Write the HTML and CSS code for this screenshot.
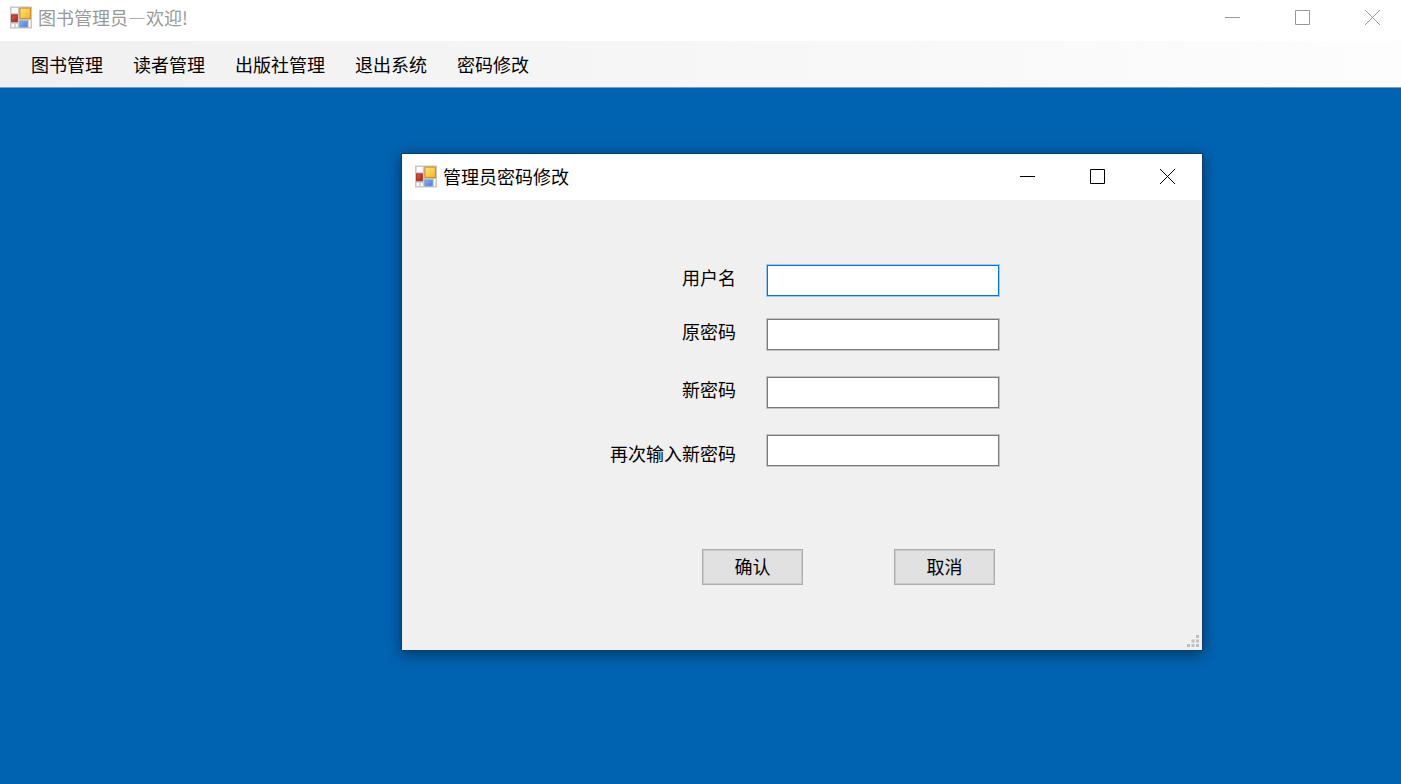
FILE: index.html
```html
<!DOCTYPE html>
<html lang="zh-CN">
<head>
    <meta charset="UTF-8">
    <meta name="viewport" content="width=device-width, initial-scale=1.0">
    <title>图书管理员—欢迎!</title>
    <link rel="stylesheet" href="styles.css">
</head>
<body>
    <!-- Shared icons -->
    <svg class="sprite" aria-hidden="true">
        <defs>
            <linearGradient id="gold" x1="0" y1="0" x2="1" y2="1">
                <stop offset="0" stop-color="#ffe680"/>
                <stop offset="1" stop-color="#f0b41c"/>
            </linearGradient>
            <linearGradient id="red" x1="0" y1="0" x2="1" y2="1">
                <stop offset="0" stop-color="#d8604c"/>
                <stop offset="1" stop-color="#b02018"/>
            </linearGradient>
            <linearGradient id="blue" x1="0" y1="0" x2="1" y2="1">
                <stop offset="0" stop-color="#8cb4f8"/>
                <stop offset="1" stop-color="#4478dc"/>
            </linearGradient>
        </defs>
        <symbol id="icon-form" viewBox="0 0 21 21">
            <rect width="21" height="21" fill="#c8c8c8"/>
            <path d="M1.500 1.500h6v5h-6zM1.500 16.500h2.500v3h-2.500zM5.500 16.500h2v3h-2zM18 13h1.500v6.500h-1.500z" fill="#fff"/>
            <rect x="9.500" y="1.500" width="10" height="10" fill="url(#gold)" stroke="#c8921c"/>
            <rect x="1.500" y="8" width="5.500" height="6.500" fill="url(#red)" stroke="#b03028"/>
            <rect x="9.500" y="14" width="7" height="5.500" fill="url(#blue)" stroke="#6c98e0"/>
        </symbol>
        <symbol id="icon-min" viewBox="0 0 15 15"><path d="M0 7.500h15"/></symbol>
        <symbol id="icon-max" viewBox="0 0 15 15"><path d="M.5 .5h14v14h-14z"/></symbol>
        <symbol id="icon-close" viewBox="0 0 15 15"><path d="M0 0l15 15M15 0l-15 15"/></symbol>
    </svg>

    <!-- Main window -->
    <header class="title-bar main-title">
        <svg class="app-icon"><use href="#icon-form"/></svg>
        <h1>图书管理员—欢迎!</h1>
        <div class="window-controls">
            <button type="button" aria-label="最小化"><svg><use href="#icon-min"/></svg></button>
            <button type="button" aria-label="最大化"><svg><use href="#icon-max"/></svg></button>
            <button type="button" aria-label="关闭"><svg><use href="#icon-close"/></svg></button>
        </div>
    </header>
    <nav class="menu">
        <a href="#">图书管理</a>
        <a href="#">读者管理</a>
        <a href="#">出版社管理</a>
        <a href="#">退出系统</a>
        <a href="#">密码修改</a>
    </nav>

    <main class="desktop">
        <!-- Change password window -->
        <section class="dialog">
            <div class="title-bar dialog-title">
                <svg class="app-icon"><use href="#icon-form"/></svg>
                <h2>管理员密码修改</h2>
                <div class="window-controls">
                    <button type="button" aria-label="最小化"><svg><use href="#icon-min"/></svg></button>
                    <button type="button" aria-label="最大化"><svg><use href="#icon-max"/></svg></button>
                    <button type="button" aria-label="关闭"><svg><use href="#icon-close"/></svg></button>
                </div>
            </div>
            <form class="password-form">
                <div class="fields">
                    <label for="username">用户名</label>
                    <input class="active" type="text" id="username">
                    <label for="old-password">原密码</label>
                    <input type="password" id="old-password">
                    <label for="new-password">新密码</label>
                    <input type="password" id="new-password">
                    <label class="long-label" for="confirm-password">再次输入新密码</label>
                    <input type="password" id="confirm-password">
                </div>
                <div class="actions">
                    <button type="submit">确认</button>
                    <button type="button">取消</button>
                </div>
            </form>
            <svg class="grip" viewBox="0 0 13 13" aria-hidden="true">
                <path d="M9 0h3v3h-3zM4.500 4.500h3v3h-3zM9 4.500h3v3h-3zM0 9h3v3h-3zM4.500 9h3v3h-3zM9 9h3v3h-3z"/>
            </svg>
        </section>
    </main>
</body>
</html>
```
FILE: styles.css
```css
:root {
    --desktop-color: #0063b1;
    --form-color: #f0f0f0;
    --inactive-color: #999999;
    --border-color: #7a7a7a;
    --active-color: #0078d7;
}

* {
    box-sizing: border-box;
}

body {
    margin: 0;
    min-height: 100vh;
    display: flex;
    flex-direction: column;
    font-family: "Noto Sans CJK SC", sans-serif;
    font-size: 18px;
    color: #000;
    background: var(--desktop-color);
}

.sprite {
    position: absolute;
    width: 0;
    height: 0;
}

/* Title bars */
.title-bar {
    display: flex;
    background: #fff;
    overflow: hidden;
}

.title-bar h1,
.title-bar h2 {
    margin: 0;
    flex: 1;
    font-size: 18px;
    font-weight: 400;
}

.main-title {
    height: 41px;
    padding-left: 10px;
    line-height: 35px;
    color: var(--inactive-color);
}

.dialog-title {
    height: 46px;
    padding-left: 13px;
    line-height: 45px;
}

.app-icon {
    width: 22px;
    height: 1lh;
    margin-right: 6px;
}

.window-controls {
    display: flex;
    gap: 1px;
    height: 1lh;
}

.main-title .window-controls {
    margin-right: -6px;
}

.window-controls button {
    display: flex;
    align-items: center;
    justify-content: center;
    width: 69px;
    padding: 0;
    border: none;
    background: none;
    color: inherit;
}

.window-controls svg {
    width: 15px;
    height: 15px;
    fill: none;
    stroke: currentColor;
}

/* Menu */
.menu {
    display: flex;
    gap: 30px;
    height: 47px;
    padding-left: 31px;
    line-height: 46px;
    background: linear-gradient(to right, #f0f0f0, #fdfdfd);
    border-bottom: 1px solid #6fa3cc;
}

.menu a {
    color: #000;
    text-decoration: none;
}

/* Dialog */
.desktop {
    flex: 1;
    position: relative;
}

.dialog {
    position: absolute;
    top: 65px;
    left: 401px;
    width: 802px;
    border: 1px solid #0f3d64;
    background: var(--form-color);
    box-shadow: 0 3px 14px rgba(0, 0, 0, 0.45);
}

.password-form {
    padding: 65px 0;
}

.fields {
    display: grid;
    grid-template-columns: 334px 232px;
    grid-template-rows: 54px 58px 58px 31px;
    column-gap: 31px;
    align-items: start;
}

.fields label {
    line-height: 25px;
    text-align: right;
}

.fields .long-label {
    align-self: end;
}

.fields input {
    height: 31px;
    padding: 0 6px;
    border: 1px solid var(--border-color);
    border-radius: 0;
    background: #fff;
    box-shadow: 0 0 0 1px #c4c4c4;
    font: inherit;
    outline: none;
}

.fields input.active,
.fields input:focus {
    border-color: var(--active-color);
    box-shadow: 0 0 0 1px #9ccaf0;
}

.actions {
    display: flex;
    gap: 91px;
    margin-top: 83px;
    padding-left: 300px;
}

.actions button {
    width: 101px;
    height: 36px;
    padding: 0 0 2px;
    border: 1px solid #adadad;
    background: #e1e1e1;
    box-shadow: inset 0 0 0 1px #cacaca;
    color: #000;
    font: inherit;
}

.actions button:hover {
    border-color: var(--active-color);
    background: #e5f1fb;
}

.grip {
    position: absolute;
    right: 2px;
    bottom: 2px;
    width: 13px;
    height: 13px;
    fill: #bfbfbf;
}
```
